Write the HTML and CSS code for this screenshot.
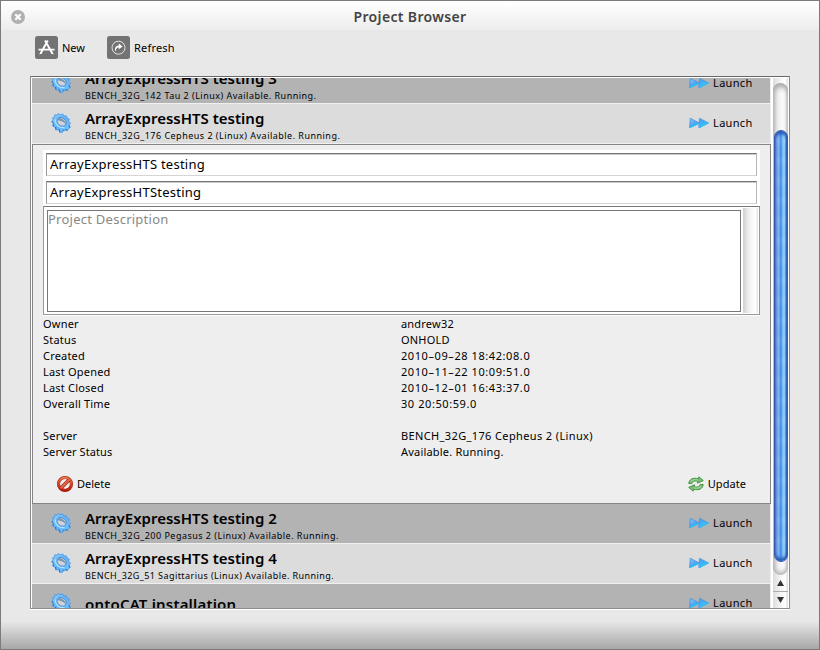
FILE: index.html
```html
<!DOCTYPE html>
<html lang="en">
<head>
<meta charset="utf-8">
<title>Project Browser</title>
<link rel="stylesheet" href="styles.css">
</head>
<body>
<svg class="defs" width="0" height="0" aria-hidden="true">
  <defs>
    <linearGradient id="gearFill" x1="0" y1="0" x2="1" y2="1"><stop offset="0" stop-color="#8fd0ff"/><stop offset=".5" stop-color="#5fb4fb"/><stop offset="1" stop-color="#7cc6ff"/></linearGradient>
    <linearGradient id="arrowFill" x1="0" y1="0" x2="1" y2="1"><stop offset="0" stop-color="#8ccbff"/><stop offset=".45" stop-color="#4aa3f0"/><stop offset="1" stop-color="#2fdcff"/></linearGradient>
    <linearGradient id="redFill" x1="0" y1="0" x2="0" y2="1"><stop offset="0" stop-color="#e8704a"/><stop offset="1" stop-color="#b81c0c"/></linearGradient>
    <symbol id="gear" viewBox="0 0 20 20">
      <path d="M1.500 4.800 3.500 4.200 3.800 1.700 6.200 2 7.300.6 9.400 1.800 11.700.9 12.700 3 15.200 2.700 16 5 18.300 6 17.600 8.300 19.600 10.200 18 11.800 19.400 14.500 17.400 15.400 16.500 17.700 14.200 16.800 13.200 18 11.800 17.300 11.300 19.500 8.600 19.300 7.800 16.600 4.800 17 4.200 14.200 1.800 13.200 2.500 10.600.600 8.600 2.200 7.200Z" fill="url(#gearFill)" stroke="#3b8edf" stroke-width=".7"/>
      <path d="M8.200 16.500l.7 2.500M4.500 14l.5 2.500M2.500 10.500 2 12.800M1 8.500l1 1.300M14.500 16.500l1.800.8M17.800 12.500l1 1.700M12 17l1 .700" stroke="#2476d3" stroke-width="1.100"/>
      <ellipse cx="10.600" cy="8.800" rx="5" ry="3.900" transform="rotate(40 10.600 8.800)" class="hole"/>
      <path d="M6.300 5.700c3.200-2.400 8.300 1.300 8.600 5.800-2.300-2.700-5-4-8.300-4.300Z" fill="#8095ae"/>
      <path d="M4.200 6.500c-.3 5 4.500 8.800 9.200 8.100" stroke="#b2e2ff" stroke-width="1.200" fill="none"/>
    </symbol>
    <symbol id="launch" viewBox="0 0 20 12">
      <path d="M1.300 1.200 10.500 6.200.600 10.800Z M10.500 1.200 19.500 6 9.800 10.800Z" fill="url(#arrowFill)" stroke="#4793d8" stroke-width=".8" stroke-linejoin="round"/>
      <path d="M1 10.600 10.500 6.300M10.100 10.700 19.300 6" stroke="#2cc4fa" stroke-width="1.100"/>
    </symbol>
  </defs>
</svg>
<div class="window">
  <header class="titlebar">
    <svg class="close" viewBox="0 0 14 14"><circle cx="7" cy="7" r="7" fill="#b0b0b0"/><path d="M4.300 4.300l5.400 5.400M9.700 4.300 4.300 9.700" stroke="#fff" stroke-width="2.200"/></svg>
    <h1>Project Browser</h1>
  </header>
  <nav class="toolbar">
    <div class="tool tool-new">
      <svg viewBox="0 0 23 23"><rect width="23" height="23" rx="2.500" fill="#737373"/><path d="M10 4.500 17.500 17.800M12.800 4.500 5.500 17.800M3.500 13.600h16" stroke="#fff" stroke-width="1.900" fill="none"/><path d="M4.500 18l2-1M18.500 18l-2-1" stroke="#fff"/></svg>
      <span>New</span>
    </div>
    <div class="tool tool-refresh">
      <svg viewBox="0 0 23 23"><rect width="23" height="23" rx="2.500" fill="#737373"/><circle cx="11.500" cy="11.700" r="6.500" fill="none" stroke="#e4e4e4" stroke-width="1"/><path d="M8.300 15.700c-1-3.200.2-6 3.500-6.200V7.600l3.800 2.800-3.800 2.800v-1.700c-1.800.1-2.900 1.500-3.500 4.200Z" fill="#fff"/></svg>
      <span>Refresh</span>
    </div>
  </nav>
  <main class="frame">
    <div class="list">
      <div class="row dark clipped">
        <svg class="gear"><use href="#gear"/></svg>
        <div class="names"><h2>ArrayExpressHTS testing 3</h2><p>BENCH_32G_142 Tau 2 (Linux) Available. Running.</p></div>
        <div class="launch"><svg><use href="#launch"/></svg><span>Launch</span></div>
      </div>
      <div class="row">
        <svg class="gear"><use href="#gear"/></svg>
        <div class="names"><h2>ArrayExpressHTS testing</h2><p>BENCH_32G_176 Cepheus 2 (Linux) Available. Running.</p></div>
        <div class="launch"><svg><use href="#launch"/></svg><span>Launch</span></div>
      </div>
      <section class="details">
        <div class="fields">
          <div class="input">ArrayExpressHTS testing</div>
          <div class="input">ArrayExpressHTStesting</div>
        </div>
        <div class="description">
          <div class="textarea">Project Description</div>
          <div class="track"></div>
        </div>
        <dl>
          <dt>Owner</dt><dd>andrew32</dd>
          <dt>Status</dt><dd>ONHOLD</dd>
          <dt>Created</dt><dd class="time">2010–09–28 18:42:08.0</dd>
          <dt>Last Opened</dt><dd class="time">2010–11–22 10:09:51.0</dd>
          <dt>Last Closed</dt><dd class="time">2010–12–01 16:43:37.0</dd>
          <dt>Overall Time</dt><dd class="time">30 20:50:59.0</dd>
          <dt class="gap">Server</dt><dd class="gap server">BENCH_32G_176 Cepheus 2 (Linux)</dd>
          <dt class="after">Server Status</dt><dd class="after">Available. Running.</dd>
        </dl>
        <div class="actions">
          <div class="action"><svg viewBox="0 0 16 16"><circle cx="8" cy="8" r="6.500" fill="#ededed" stroke="#9d1c0e" stroke-width="3"/><circle cx="8" cy="8" r="6.300" fill="none" stroke="url(#redFill)" stroke-width="2.600"/><path d="M4 12 12 4" stroke="#a92010" stroke-width="3.600"/><path d="M3.800 12.200 12.200 3.800" stroke="#e0684a" stroke-width="2.200"/></svg><span>Delete</span></div>
          <div class="action update"><svg viewBox="0 0 16 16"><path d="M.800 7.500C1 3.500 5 1.200 10.200 2.800L10.800.8 15.300 4.600 9.500 7.200 9.700 5.300C6 4.500 4.500 5.200 3.800 7.500Z M15.200 8.500C15 12.500 11 14.800 5.800 13.200L5.200 15.200.700 11.400 6.500 8.800 6.300 10.700C10 11.500 11.500 10.800 12.200 8.500Z" fill="#79bd73" stroke="#3b8e3d" stroke-width=".9" stroke-linejoin="round"/><path d="M2.500 5.500C4 3.800 7 3.300 10 4M13.500 10C12 12 9 12.500 6 11.800" stroke="#b5e0ad" fill="none" stroke-width=".9"/></svg><span>Update</span></div>
        </div>
      </section>
      <div class="row dark">
        <svg class="gear"><use href="#gear"/></svg>
        <div class="names"><h2>ArrayExpressHTS testing 2</h2><p>BENCH_32G_200 Pegasus 2 (Linux) Available. Running.</p></div>
        <div class="launch"><svg><use href="#launch"/></svg><span>Launch</span></div>
      </div>
      <div class="row">
        <svg class="gear"><use href="#gear"/></svg>
        <div class="names"><h2>ArrayExpressHTS testing 4</h2><p class="tight">BENCH_32G_51 Sagittarius (Linux) Available. Running.</p></div>
        <div class="launch"><svg><use href="#launch"/></svg><span>Launch</span></div>
      </div>
      <div class="row dark last">
        <svg class="gear"><use href="#gear"/></svg>
        <div class="names"><h2>ontoCAT installation</h2></div>
        <div class="launch"><svg><use href="#launch"/></svg><span>Launch</span></div>
      </div>
    </div>
    <aside class="scrollbar">
      <div class="channel"><div class="thumb"></div></div>
      <div class="arrow"><svg viewBox="0 0 7 6"><path d="M3.500 0 7 6H0Z" fill="#333"/></svg></div>
      <div class="arrow down"><svg viewBox="0 0 7 6"><path d="M0 0h7L3.500 6Z" fill="#333"/></svg></div>
    </aside>
  </main>
  <footer></footer>
</div>
</body>
</html>
```
FILE: styles.css
```css
* { box-sizing: border-box; margin: 0; padding: 0; }
body { width: 820px; height: 650px; overflow: hidden; font-family: "Noto Sans", sans-serif; font-size: 11px; color: #000; }
svg { display: block; flex: none; }
.defs { position: absolute; }
.hole { fill: #d2d4d8; stroke: #3c86d0; stroke-width: .8; }
.window { width: 820px; height: 650px; border: 1px solid #7b7b7b; background: #e8e8e8; display: flex; flex-direction: column; }
.titlebar { height: 29px; flex: none; display: flex; align-items: center; background: linear-gradient(#fff, #ededed); padding: 0 10px; }
.close { width: 14px; height: 14px; margin-top: 3px; }
.titlebar h1 { flex: 1; text-align: center; padding: 3px 14px 0 0; font-size: 14px; line-height: 20px; font-weight: 600; color: #444; letter-spacing: .36px; }
.toolbar { height: 46px; flex: none; display: flex; padding: 6px 0 0 33.500px; }
.tool { display: flex; align-items: center; gap: 4.500px; height: 23px; letter-spacing: .2px; }
.tool svg { width: 23px; height: 23px; }
.tool-new { width: 72px; letter-spacing: 0; }
.frame { width: 760px; height: 533px; flex: none; margin-left: 29px; border: 1px solid #8c8c8c; border-top-color: #686868; background: #fff; display: flex; padding: 1px 0 0 1px; box-shadow: 0 1px #fff; }
.list { width: 739px; height: 530px; overflow: hidden; flex: none; background: #ededed; }
.row { height: 40px; width: 738px; background: #dcdcdc; border-bottom: 1px solid #f0f0f0; display: flex; align-items: flex-start; padding: 9px 17.500px 0 19px; }
.row.dark { background: #b3b3b3; }
.row.clipped { margin-top: -14px; }
.row.last { border: 0; }
.row.last h2 { padding-top: 6px; letter-spacing: .18px; }
.gear { width: 20px; height: 20px; margin-left: -.5px; margin-right: .5px; }
.names { margin: -5px 0 0 14px; flex: 1; }
.names h2 { font-size: 15px; line-height: 20px; font-weight: 600; white-space: nowrap; }
.names p { font-size: 9px; line-height: 12px; margin-top: 2px; letter-spacing: .48px; white-space: nowrap; }
.names .tight { letter-spacing: .43px; }
.launch { display: flex; align-items: center; height: 20px; gap: 4px; letter-spacing: .3px; }
.launch svg { width: 20px; height: 12px; }
.launch span, .action span { margin-top: -2px; }
.details { width: 739px; height: 360px; background: #eee; border: 1px solid #858585; padding: 5px 10px 0; }
.fields { height: 56px; width: 717px; background: #fff; padding: 3px 3px 0; display: flex; flex-direction: column; gap: 5px; }
.input { height: 23px; width: 711px; border: 1px solid; border-color: #767676 #b5b5b5 #d5d5d5 #979797; box-shadow: inset 0 1px #ccc; font-size: 13px; line-height: 21px; padding-left: 3px; letter-spacing: .24px; }
.description { width: 717px; height: 109px; border: 1px solid #999; border-top-color: #777; background: #fff; padding: 3px 0 1px 3px; display: flex; box-shadow: 0 1px #fff; }
.textarea { width: 694px; height: 102px; border: 1px solid #777; color: #888; font-size: 13px; line-height: 16px; letter-spacing: .25px; }
.track { width: 15px; margin: -2px 0 0 2px; background: linear-gradient(90deg, #d0d0d0, #f1f1f1 40%, #fff 85%, #ddd); }
dl { display: grid; grid-template-columns: 358px 1fr; grid-auto-rows: 16px; line-height: 16px; padding-top: 1px; height: 153px; letter-spacing: .2px; }
dl .time { letter-spacing: .58px; }
dl .server { letter-spacing: .37px; }
dl .gap { grid-row: 8; }
dl .after { grid-row: 9; }
dt.after { letter-spacing: .08px; }
.actions { display: flex; justify-content: space-between; padding: 0 14px; }
.update { letter-spacing: .05px; }
.action { display: flex; align-items: center; gap: 4px; height: 32px; }
.action svg { width: 16px; height: 16px; }
.scrollbar { width: 15px; height: 530px; margin-left: 2px; display: flex; flex-direction: column; align-items: center; background: linear-gradient(90deg, #ddd, #f4f4f4 50%, #fff 80%, #ddd); }
.channel { width: 15px; height: 492px; padding-top: 48px; border-radius: 8px; margin-top: 5px; flex: none; box-shadow: inset 0 4px 5px #aaa, inset 0 -3px 4px #bbb; background: linear-gradient(90deg, #d0d0d0, #f0f0f0 35%, #fff 80%, #ddd); }
.thumb { height: 432px; width: 14px; border-radius: 7px; margin: -1px 0 0 1px; border: 1px solid #3559af; background: repeating-linear-gradient(180deg, #ffffff00 0 4px, #ffffff14 10px, #ffffff00 16px 20px), linear-gradient(90deg, #709ee4, #82b3ef 32%, #3d88e1 48%, #75b9f1 63%, #9dd6fa 78%, #458cdd 93%, #2d54a8); box-shadow: inset 0 3px 3px #275cb9, inset 0 -3px 3px #275cb9; }
.arrow { width: 15px; height: 17px; display: grid; place-items: center; border-bottom: 1px solid #aaa; }
.arrow svg { width: 7px; height: 6px; }
.arrow.down { border: 0; height: 16px; }
footer { margin-top: auto; height: 29px; background: linear-gradient(#eaeaea, #a7a7a7); flex: none; }
```
